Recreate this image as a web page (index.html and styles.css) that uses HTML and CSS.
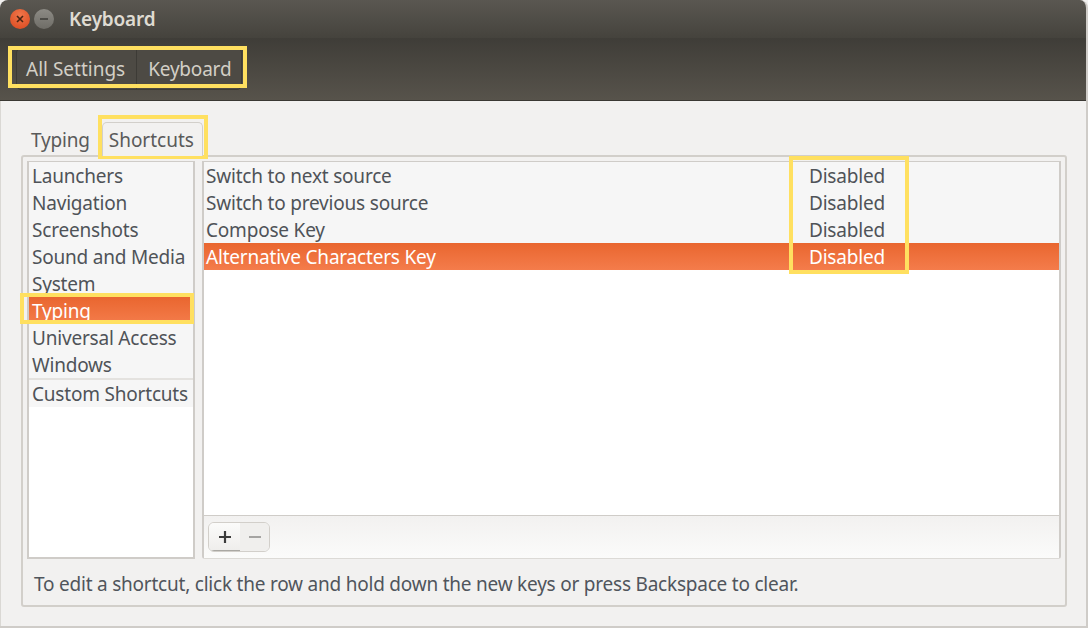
FILE: index.html
```html
<!DOCTYPE html>
<html lang="en">
<head>
<meta charset="utf-8">
<title>Keyboard</title>
<link rel="stylesheet" href="styles.css">
</head>
<body>
<div class="window">
  <header class="titlebar">
    <span class="wbtn close"><svg width="10" height="10" viewBox="0 0 10 10"><path d="M2 2l6 6M8 2l-6 6" stroke="#4a2412" stroke-width="1.6" fill="none"/></svg></span>
    <span class="wbtn min"><svg width="10" height="10" viewBox="0 0 10 10"><path d="M1 5h8" stroke="#3c3b37" stroke-width="1.6" fill="none"/></svg></span>
    <span class="title">Keyboard</span>
  </header>
  <div class="toolbar">
    <div class="crumbs">
      <span class="crumb">All Settings</span>
      <span class="crumb">Keyboard</span>
    </div>
  </div>
  <main class="content">
    <div class="tabs">
      <span class="tab">Typing</span>
      <span class="tab active">Shortcuts</span>
    </div>
    <section class="notebook">
      <div class="panes">
        <nav class="categories">
          <div class="cat">Launchers</div>
          <div class="cat">Navigation</div>
          <div class="cat">Screenshots</div>
          <div class="cat">Sound and Media</div>
          <div class="cat">System</div>
          <div class="cat selected">Typing</div>
          <div class="cat">Universal Access</div>
          <div class="cat">Windows</div>
          <div class="cat custom">Custom Shortcuts</div>
        </nav>
        <div class="shortcuts">
          <div class="rows">
            <div class="row"><span>Switch to next source</span><span class="accel">Disabled</span></div>
            <div class="row"><span>Switch to previous source</span><span class="accel">Disabled</span></div>
            <div class="row"><span>Compose Key</span><span class="accel">Disabled</span></div>
            <div class="row selected"><span>Alternative Characters Key</span><span class="accel">Disabled</span></div>
          </div>
          <div class="listbar">
            <div class="addremove">
              <span class="ar add"><svg width="14" height="14" viewBox="0 0 14 14"><path d="M7 1v12M1 7h12" stroke="#3c3c3c" stroke-width="2.2" fill="none"/></svg></span>
              <span class="ar remove"><svg width="14" height="14" viewBox="0 0 14 14"><path d="M1 7h12" stroke="#a5a4a2" stroke-width="2.2" fill="none"/></svg></span>
            </div>
          </div>
        </div>
      </div>
      <p class="hint">To edit a shortcut, click the row and hold down the new keys or press Backspace to clear.</p>
    </section>
  </main>
</div>
<div class="mark mark-crumbs"></div>
<div class="mark mark-tab"></div>
<div class="mark mark-cat"></div>
<div class="mark mark-accel"></div>
</body>
</html>
```
FILE: styles.css
```css
* { box-sizing: border-box; }
html, body { margin: 0; height: 100%; overflow: hidden; }
body {
  position: relative;
  width: 1088px;
  height: 628px;
  font-family: "Noto Sans", "Open Sans", sans-serif;
  font-size: 19px;
  letter-spacing: -.2px;
  color: #4c4c4c;
  background: #f2f1f0;
}
.window {
  display: flex;
  flex-direction: column;
  width: 1088px;
  height: 628px;
  border-right: 2px solid #cfccc8;
  border-bottom: 2px solid #cfccc8;
  border-radius: 8px 8px 0 0;
  overflow: hidden;
}
.titlebar {
  display: flex;
  align-items: center;
  height: 38px;
  padding-left: 10px;
  gap: 4px;
  background: linear-gradient(#5a5751, #45433d);
}
.wbtn {
  display: flex;
  align-items: center;
  justify-content: center;
  width: 20px;
  height: 20px;
  border-radius: 50%;
}
.close { background: radial-gradient(circle at 50% 30%, #f0764a, #d9471d); }
.min { background: linear-gradient(#8d8b85, #6f6d67); }
.title {
  margin-left: 11px;
  font-weight: 600;
  color: #dfdbd2;
}
.toolbar {
  display: flex;
  align-items: center;
  height: 63px;
  padding-left: 16px;
  background: linear-gradient(#3f3d38, #57534b);
  border-bottom: 1px solid #3a3833;
}
.crumbs {
  display: flex;
  height: 42px;
  border: 1px solid #3d3b36;
  border-radius: 5px;
  background: #4d4a44;
}
.crumb {
  display: flex;
  align-items: center;
  padding: 0 11px 0 9px;
  letter-spacing: 0;
  color: #d3cfc6;
}
.crumb + .crumb {
  padding: 0 10px 0 11px;
  letter-spacing: -.2px;
  border-left: 1px solid #3d3b36;
}
.content {
  flex: 1;
  display: flex;
  flex-direction: column;
  padding: 20px 19px 19px 20px;
  min-height: 0;
  border-left: 1px solid #dad8d4;
}
.tabs {
  display: flex;
  align-items: flex-end;
  height: 34px;
  padding-left: 1px;
}
.tab {
  display: flex;
  align-items: center;
  justify-content: center;
  height: 30px;
  padding: 0 9px;
  color: #5a5a5a;
}
.tab.active {
  height: 34px;
  margin-left: 3px;
  margin-bottom: -1px;
  padding: 0 8px 0 6px;
  letter-spacing: 0;
  border: 1px solid #d2cfca;
  border-bottom: 0;
  border-radius: 5px 5px 0 0;
  background: #f2f1f0;
  position: relative;
  z-index: 1;
}
.notebook {
  flex: 1;
  display: flex;
  flex-direction: column;
  padding: 4px 4px 0 4px;
  border: 2px solid #d2cfca;
  border-radius: 3px;
  min-height: 0;
}
.panes {
  display: flex;
  gap: 7px;
  height: 398px;
}
.categories {
  width: 168px;
  background: #fff;
  border: 2px solid #cfccc8;
  border-top-width: 1px;
}
.cat {
  display: flex;
  align-items: center;
  height: 27px;
  padding-left: 3px;
  background: #f6f6f6;
  white-space: nowrap;
  color: #4f5358;
}
.cat.selected, .row.selected {
  background: linear-gradient(#e9662f, #f47c4b);
  color: #fff;
}
.cat.custom {
  height: 29px;
  border-top: 2px solid #e4e2df;
}
.shortcuts {
  flex: 1;
  display: flex;
  flex-direction: column;
  border: 2px solid #cfccc8;
  border-top-width: 1px;
  border-bottom: 1px solid #dcdad6;
  border-radius: 0 0 3px 3px;
}
.rows {
  flex: 1;
  background: #fff;
  border-bottom: 1px solid #cfccc8;
}
.row {
  display: flex;
  align-items: center;
  justify-content: space-between;
  height: 27px;
  padding-left: 2px;
  background: #f6f6f6;
  color: #4f5358;
}
.accel { width: 250px; }
.listbar {
  display: flex;
  align-items: center;
  height: 42px;
  padding-left: 4px;
  background: linear-gradient(#f2f1f0, #fbfbfa);
}
.addremove {
  display: flex;
  height: 30px;
  border: 1px solid #d2cfca;
  border-radius: 6px;
  overflow: hidden;
}
.ar {
  display: flex;
  align-items: center;
  justify-content: center;
}
.add {
  width: 31px;
  background: linear-gradient(#fbfbfa, #efeeec);
  border-bottom: 1px solid #aaa8a3;
}
.remove { width: 29px; background: #f0efed; }
.hint {
  margin: 0;
  padding: 12px 0 0 7px;
  letter-spacing: -.22px;
  white-space: nowrap;
  color: #50555c;
}
.mark {
  position: absolute;
  border: 4px solid #ffe060;
  pointer-events: none;
}
.mark-crumbs { left: 8px; top: 46px; width: 239px; height: 42px; }
.mark-tab { left: 98px; top: 115px; width: 110px; height: 44px; }
.mark-cat { left: 20px; top: 293px; width: 174px; height: 31px; }
.mark-accel { left: 789px; top: 156px; width: 120px; height: 118px; }
```
